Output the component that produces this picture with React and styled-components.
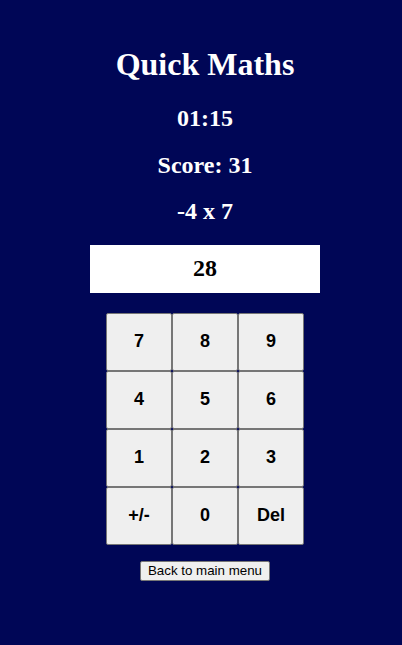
import React, { useState } from "react";
import styled, { createGlobalStyle } from "styled-components";

const GlobalStyle = createGlobalStyle`
  html, body {
    margin: 0;
    background-color: #000656;
  }
`;

const Page = styled.main`
  min-height: 645px;
  box-sizing: border-box;
  padding: 25px 0 0 8px;
  background-color: #000656;
  color: #ffffff;
  font-family: "Liberation Serif", "Times New Roman", serif;
  text-align: center;
`;

const Title = styled.h1`
  font-size: 32px;
  font-weight: bold;
  margin: 21.44px 0;
`;

const Line = styled.h2`
  font-size: 24px;
  font-weight: bold;
  margin: 19.67px 0;
`;

const Answer = styled.div`
  width: 230px;
  height: 48px;
  margin: 0 auto;
  display: flex;
  align-items: center;
  justify-content: center;
  background: #ffffff;
  color: #000000;
  font-size: 24px;
  font-weight: bold;
`;

const Keypad = styled.div`
  display: grid;
  grid-template-columns: repeat(3, 66px);
  grid-auto-rows: 58px;
  justify-content: center;
  margin: 20px auto 16px;
`;

const Key = styled.button`
  box-sizing: border-box;
  background: #efefef;
  border: 1px solid #767676;
  border-radius: 2px;
  color: #000000;
  font-family: "Liberation Sans", Arial, sans-serif;
  font-size: 18px;
  font-weight: bold;
  padding: 0;
  cursor: pointer;
`;

const BackButton = styled.button`
  box-sizing: border-box;
  height: 20px;
  padding: 1px 7px;
  background: #efefef;
  border: 1px solid #767676;
  border-radius: 2px;
  color: #000000;
  font-family: "Liberation Sans", Arial, sans-serif;
  font-size: 13.33px;
  line-height: 16px;
  cursor: pointer;
`;

const keys = ["7", "8", "9", "4", "5", "6", "1", "2", "3", "+/-", "0", "Del"];

export default function App() {
  const [answer, setAnswer] = useState("28");

  const press = (k) => {
    if (k === "Del") setAnswer((a) => a.slice(0, -1));
    else if (k === "+/-")
      setAnswer((a) => (a.startsWith("-") ? a.slice(1) : "-" + a));
    else setAnswer((a) => a + k);
  };

  return (
    <>
      <GlobalStyle />
      <Page>
        <Title>Quick Maths</Title>
        <Line>01:15</Line>
        <Line>Score: 31</Line>
        <Line>-4 x 7</Line>
        <Answer>{answer}</Answer>
        <Keypad>
          {keys.map((k) => (
            <Key key={k} onClick={() => press(k)}>
              {k}
            </Key>
          ))}
        </Keypad>
        <BackButton>Back to main menu</BackButton>
      </Page>
    </>
  );
}
